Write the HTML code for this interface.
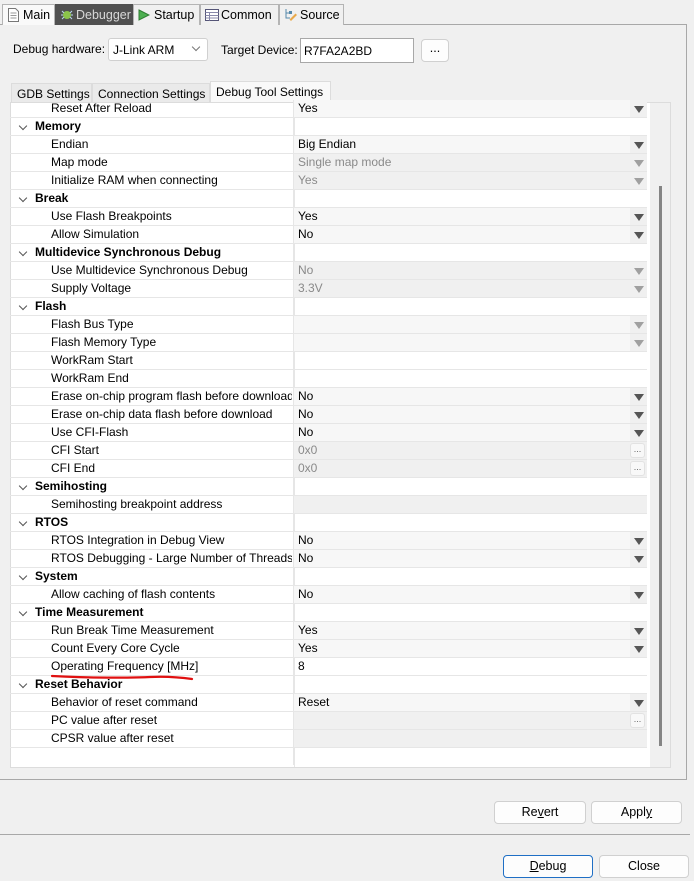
<!DOCTYPE html>
<html><head><meta charset="utf-8"><style>
*{box-sizing:border-box;margin:0;padding:0}
body{width:694px;height:881px;background:#f0f0f0;font-family:"Liberation Sans",sans-serif;font-size:12px;color:#000;position:relative;overflow:hidden}
.a{position:absolute}
.tab{position:absolute;top:4px;height:21px;border:1px solid #b4b4b4;border-bottom:none;font-size:12.5px;line-height:20px;padding-left:20px;background:#f0f0f0;white-space:nowrap}
.itab{position:absolute;border:1px solid #dcdcdc;border-bottom:none;padding:3px 5px;background:#eaeaea;font-size:12px;white-space:nowrap;overflow:hidden}
.btn{position:absolute;border:1px solid #d0d0d0;border-radius:4px;background:#fdfdfd;text-align:center;line-height:20px;font-size:12.5px}
.row{position:absolute;left:12px;width:637px;height:18px;border-bottom:1px solid #e6e6e6}
.row .n{position:absolute;left:41px;top:1px;white-space:nowrap;width:241px;overflow:hidden}
.row.c .n{left:25px;font-weight:bold}
.row.c .ch{position:absolute;left:10px;top:5px;width:6px;height:6px;border-right:1.3px solid #555;border-bottom:1.3px solid #555;transform:rotate(45deg)}
.row .v{position:absolute;left:283px;top:0;width:354px;height:17px;border-left:1px solid #e6e6e6;padding-left:4px;line-height:16px}
.v.l{background:#f7f7f7}
.v.g{background:#f0f0f0;color:#8a8a8a}
.v .ar{position:absolute;right:0;top:0;width:17px;height:17px;background:#f0f0f0}
.v .ar:after{content:"";position:absolute;left:4px;top:6px;border-left:5px solid transparent;border-right:5px solid transparent;border-top:7px solid #555}
.v.g .ar:after,.v .ar.lt:after{border-top-color:#a0a0a0}
.v .el{position:absolute;right:2px;top:1px;width:15px;height:15px;border:1px solid #e2e2e2;border-radius:3px;background:#f8f8f8;font-size:9px;line-height:10px;text-align:center;color:#666}
</style></head><body>
<div class="a" style="left:0;top:24px;width:687px;height:756px;border:1px solid #a8a8a8;border-left:none"></div>
<div class="tab" style="left:2px;width:53px;background:#f9f9f9">Main
<svg class="a" style="left:5px;top:3px" width="11" height="14"><path d="M.5.5h7l3 3v10H.5z" fill="#fff" stroke="#777"/><path d="M2.5 5h6M2.5 7.5h6M2.5 10h6" stroke="#999"/></svg></div>
<div class="tab" style="left:55px;width:78px;background:#505050;color:#d8d8d8;border-color:#505050">Debugger
<svg class="a" style="left:4px;top:3px" width="13" height="13"><circle cx="7" cy="7" r="4" fill="#8bc34a"/><path d="M2 3l2 2M12 3l-2 2M1 7h2M11 7h2M2 11l2-2M12 11l-2-2" stroke="#bde"/></svg></div>
<div class="tab" style="left:133px;width:67px">Startup
<svg class="a" style="left:4px;top:4px" width="12" height="12"><path d="M1 1l10 5-10 5z" fill="#4caf50" stroke="#2e7d32"/></svg></div>
<div class="tab" style="left:200px;width:79px">Common
<svg class="a" style="left:4px;top:4px" width="14" height="12"><rect x=".5" y=".5" width="13" height="11" fill="#fff" stroke="#557"/><path d="M.5 3.5h13M4.5 3.5v8M.5 6.5h13M.5 9h13" stroke="#88a"/></svg></div>
<div class="tab" style="left:279px;width:65px">Source
<svg class="a" style="left:4px;top:3px" width="14" height="14"><path d="M2 1v9h4M2 5h4" stroke="#58a" fill="none"/><rect x="5" y="3" width="3" height="3" fill="#58a"/><path d="M7 13l6-6-1.5-1.5-6 6z" fill="#e9a94b"/></svg></div>

<div class="a" style="left:13px;top:42px">Debug hardware:</div>
<div class="a" style="left:108px;top:38px;width:100px;height:23px;border:1px solid #d0d0d0;border-radius:3px;background:#fff;padding:4px 4px">J-Link ARM<span class="a" style="left:84px;top:5px;width:6px;height:6px;border-right:1px solid #777;border-bottom:1px solid #777;transform:rotate(45deg)"></span></div>
<div class="a" style="left:221px;top:43px">Target Device:</div>
<div class="a" style="left:300px;top:38px;width:114px;height:25px;border:1px solid #a8a8a8;background:#fff;padding:5px 3px">R7FA2A2BD</div>
<div class="btn" style="left:421px;top:39px;width:28px;height:23px;line-height:17px">...</div>

<div class="itab" style="left:11px;top:83px;width:81px;height:19px">GDB Settings</div>
<div class="itab" style="left:92px;top:83px;width:118px;height:19px">Connection Settings</div>
<div class="itab" style="left:210px;top:81px;width:121px;height:22px;background:#f9f9f9">Debug Tool Settings</div>
<div class="a" style="left:10px;top:102px;width:661px;height:666px;border:1px solid #dcdcdc;background:#fff;overflow:hidden">
<div class="a" style="left:639px;top:0;width:21px;height:666px;background:#f0f0f0"></div>
<div class="a" style="left:648px;top:83px;width:3px;height:560px;background:#858585"></div>
<div class="a" style="left:283px;top:0;width:1px;height:666px;background:#e6e6e6"></div>
</div>
<div class="a" style="left:-2px;top:100px;width:660px;height:667px;overflow:hidden">
<div class="row" style="top:0"><div class="n">Reset After Reload</div><div class="v l">Yes<div class="ar"></div></div></div>
<div class="row c" style="top:18px"><div class="ch"></div><div class="n">Memory</div><div class="v"></div></div>
<div class="row" style="top:36px"><div class="n">Endian</div><div class="v l">Big Endian<div class="ar"></div></div></div>
<div class="row" style="top:54px"><div class="n">Map mode</div><div class="v g">Single map mode<div class="ar"></div></div></div>
<div class="row" style="top:72px"><div class="n">Initialize RAM when connecting</div><div class="v g">Yes<div class="ar"></div></div></div>
<div class="row c" style="top:90px"><div class="ch"></div><div class="n">Break</div><div class="v"></div></div>
<div class="row" style="top:108px"><div class="n">Use Flash Breakpoints</div><div class="v l">Yes<div class="ar"></div></div></div>
<div class="row" style="top:126px"><div class="n">Allow Simulation</div><div class="v l">No<div class="ar"></div></div></div>
<div class="row c" style="top:144px"><div class="ch"></div><div class="n">Multidevice Synchronous Debug</div><div class="v"></div></div>
<div class="row" style="top:162px"><div class="n">Use Multidevice Synchronous Debug</div><div class="v g">No<div class="ar"></div></div></div>
<div class="row" style="top:180px"><div class="n">Supply Voltage</div><div class="v g">3.3V<div class="ar"></div></div></div>
<div class="row c" style="top:198px"><div class="ch"></div><div class="n">Flash</div><div class="v"></div></div>
<div class="row" style="top:216px"><div class="n">Flash Bus Type</div><div class="v l"><div class="ar lt"></div></div></div>
<div class="row" style="top:234px"><div class="n">Flash Memory Type</div><div class="v l"><div class="ar lt"></div></div></div>
<div class="row" style="top:252px"><div class="n">WorkRam Start</div><div class="v"></div></div>
<div class="row" style="top:270px"><div class="n">WorkRam End</div><div class="v"></div></div>
<div class="row" style="top:288px"><div class="n">Erase on-chip program flash before download</div><div class="v l">No<div class="ar"></div></div></div>
<div class="row" style="top:306px"><div class="n">Erase on-chip data flash before download</div><div class="v l">No<div class="ar"></div></div></div>
<div class="row" style="top:324px"><div class="n">Use CFI-Flash</div><div class="v l">No<div class="ar"></div></div></div>
<div class="row" style="top:342px"><div class="n">CFI Start</div><div class="v g">0x0<div class="el">...</div></div></div>
<div class="row" style="top:360px"><div class="n">CFI End</div><div class="v g">0x0<div class="el">...</div></div></div>
<div class="row c" style="top:378px"><div class="ch"></div><div class="n">Semihosting</div><div class="v"></div></div>
<div class="row" style="top:396px"><div class="n">Semihosting breakpoint address</div><div class="v g"></div></div>
<div class="row c" style="top:414px"><div class="ch"></div><div class="n">RTOS</div><div class="v"></div></div>
<div class="row" style="top:432px"><div class="n">RTOS Integration in Debug View</div><div class="v l">No<div class="ar"></div></div></div>
<div class="row" style="top:450px"><div class="n">RTOS Debugging - Large Number of Threads.</div><div class="v l">No<div class="ar"></div></div></div>
<div class="row c" style="top:468px"><div class="ch"></div><div class="n">System</div><div class="v"></div></div>
<div class="row" style="top:486px"><div class="n">Allow caching of flash contents</div><div class="v l">No<div class="ar"></div></div></div>
<div class="row c" style="top:504px"><div class="ch"></div><div class="n">Time Measurement</div><div class="v"></div></div>
<div class="row" style="top:522px"><div class="n">Run Break Time Measurement</div><div class="v l">Yes<div class="ar"></div></div></div>
<div class="row" style="top:540px"><div class="n">Count Every Core Cycle</div><div class="v l">Yes<div class="ar"></div></div></div>
<div class="row" style="top:558px"><div class="n">Operating Frequency [MHz]</div><div class="v">8</div></div>
<div class="row c" style="top:576px"><div class="ch"></div><div class="n">Reset Behavior</div><div class="v"></div></div>
<div class="row" style="top:594px"><div class="n">Behavior of reset command</div><div class="v l">Reset<div class="ar"></div></div></div>
<div class="row" style="top:612px"><div class="n">PC value after reset</div><div class="v g"><div class="el">...</div></div></div>
<div class="row" style="top:630px"><div class="n">CPSR value after reset</div><div class="v g"></div></div>
<div class="row" style="top:648px;border-bottom:none"><div class="n"></div><div class="v"></div></div>
</div>
<svg class="a" style="left:50px;top:672px" width="145" height="10"><path d="M2 4C40 6 80 6 100 5S135 6 142 7" stroke="#e01010" stroke-width="2.2" fill="none" stroke-linecap="round"/></svg>

<div class="a" style="left:0;top:834px;width:690px;height:1px;background:#a8a8a8"></div>
<div class="btn" style="left:494px;top:801px;width:92px;height:23px">Re<u>v</u>ert</div>
<div class="btn" style="left:591px;top:801px;width:91px;height:23px">Appl<u>y</u></div>
<div class="btn" style="left:503px;top:855px;width:90px;height:23px;border-color:#1f6fc5"><u>D</u>ebug</div>
<div class="btn" style="left:599px;top:855px;width:90px;height:23px">Close</div>
</body></html>
